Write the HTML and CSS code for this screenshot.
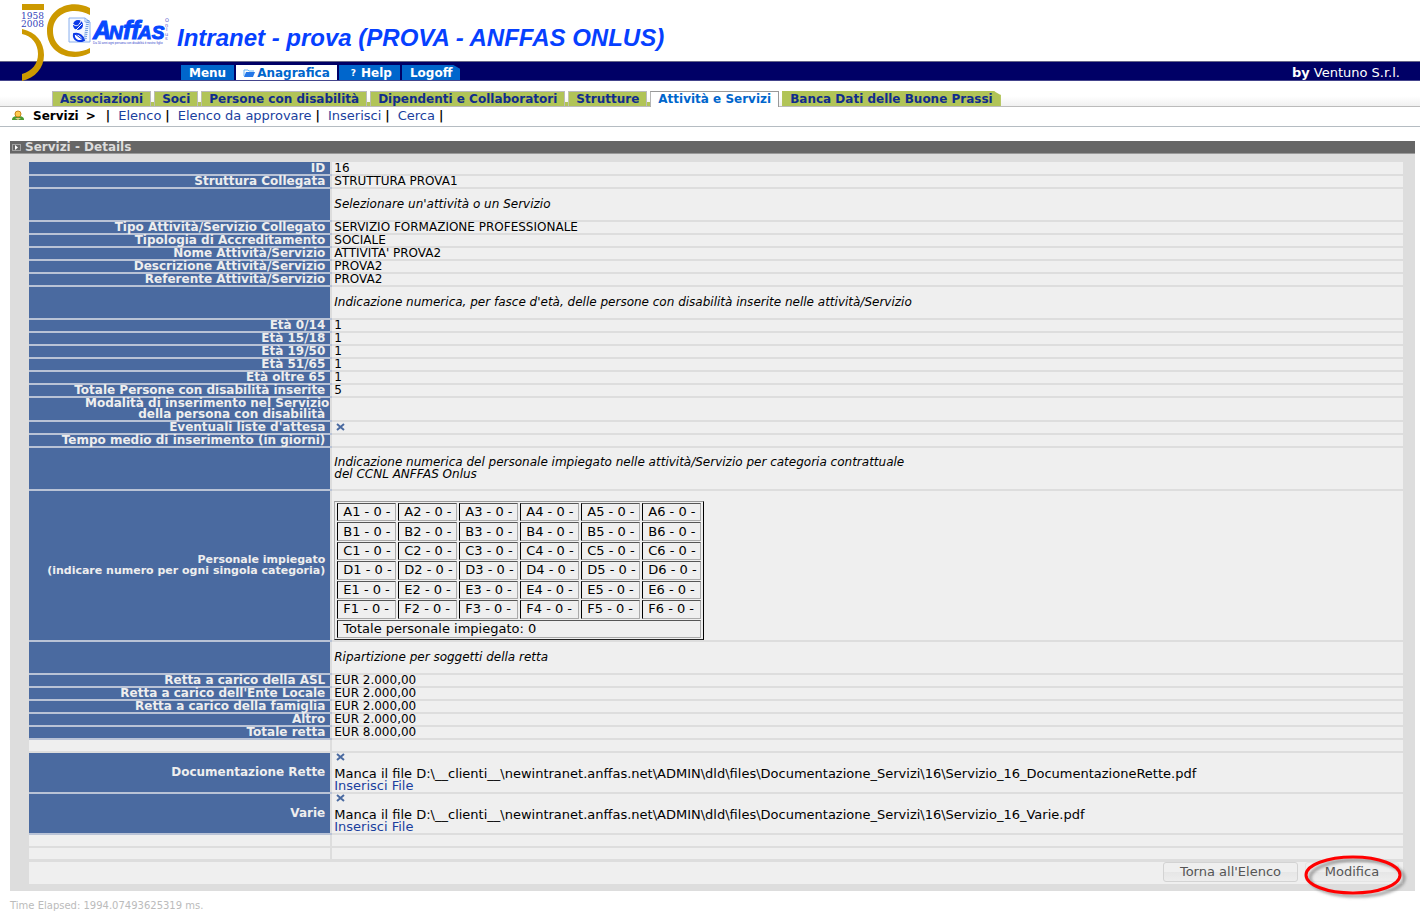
FILE: index.html
```
<!DOCTYPE html>
<html lang="it">
<head>
<meta charset="utf-8">
<title>Intranet - Servizi</title>
<link rel="stylesheet" href="styles.css">
</head>
<body>
<header class="masthead">
  <svg class="logo" width="176" height="84" viewBox="0 0 176 84" role="img" aria-label="Anffas Onlus 1958 2008">
    <path d="M22 4h22v6H22z" fill="#c90"/>
    <path d="M22 29C36 32 44 42 44 55S35 78 22 81V74C32 71 38 64 38 54S32 36 22 34z" fill="#c90"/>
    <path d="M90 15V8C70-2 47 9 47 31s23 32 43 22v-5C73 57 53 49 53 31S73 6 90 15z" fill="#c90"/>
    <g font-family="DejaVu Serif, serif" font-size="9" fill="#34b"><text x="21" y="19">1958</text><text x="21" y="27">2008</text></g>
    <path d="M69 18h16l5 4v20H69zM85 18v4h5" fill="#f4f8ff" stroke="#8ab0ee"/>
    <ellipse cx="78" cy="25" rx="5" ry="5" fill="#0a38e8"/><path d="M73 24c3 3 6 2 8-3M76 30l6-6" stroke="#fff" fill="none"/>
    <path d="M74 34c5-1 8 1 10 6-6 3-11-1-10-6z" fill="#fff" stroke="#0a38e8" stroke-width="2"/><path d="M75 34l8 6" stroke="#0a38e8"/>
    <path d="M88 20l-3 20" stroke="#6a9ae0" stroke-width="3" stroke-dasharray="1 1"/>
    <g font-family="Liberation Sans, sans-serif" fill="#0648ff" stroke="#0648ff" font-weight="bold" font-style="italic"><text x="93" y="39" font-size="25">A</text><text x="109" y="39" font-size="19">N</text><text x="123" y="39" font-size="26">ff</text><text x="138" y="39" font-size="19">AS</text></g>
    <text x="93" y="44" font-family="Liberation Sans, sans-serif" font-size="3" fill="#34c">Da 50 anni ogni persona con disabilità è nostro figlio</text>
    <g font-family="DejaVu Sans, sans-serif" font-size="5" fill="#55c"><text x="165" y="22">O</text><text x="165" y="27">n</text><text x="166" y="31">l</text><text x="165" y="36">u</text><text x="165" y="40">s</text></g>
  </svg>
  <h1 class="site-title">Intranet - prova (PROVA - ANFFAS ONLUS)</h1>
</header>
<nav class="topbar">
  <div class="top-tabs">
    <a class="top-tab" href="#">Menu</a>
    <a class="top-tab top-tab-active" href="#"><svg width="12" height="8" viewBox="0 0 12 8"><path d="M1 7V1h4l1 1h5" fill="none" stroke="#69b4f5"/><path d="M3 3h9l-2 5H1z" fill="#2678e8"/></svg>Anagrafica</a>
    <a class="top-tab" href="#"><span class="question">?</span>Help</a>
    <a class="top-tab top-tab-last" href="#">Logoff</a>
  </div>
  <p class="credit"><b>by</b> Ventuno S.r.l.</p>
</nav>
<nav class="sections">
  <a class="section" href="#">Associazioni</a>
  <a class="section" href="#">Soci</a>
  <a class="section" href="#">Persone con disabilità</a>
  <a class="section" href="#">Dipendenti e Collaboratori</a>
  <a class="section" href="#">Strutture</a>
  <a class="section section-active" href="#">Attività e Servizi</a>
  <a class="section section-last" href="#">Banca Dati delle Buone Prassi</a>
</nav>
<nav class="crumbs">
  <svg class="user" width="12" height="11" viewBox="0 0 12 11"><path d="M0 10c0-3 2-4 6-4s6 1 6 4z" fill="#4a9b32"/><path d="M3 8l3 2 3-2" fill="#dfc890"/><circle cx="6" cy="4" r="3" fill="#ffcb50" stroke="#c98218"/></svg>
  <b class="crumb-title">Servizi</b><b class="arrow">&gt;</b>
  <b>|</b><a href="#">Elenco</a><b>|</b><a href="#">Elenco da approvare</a><b>|</b><a href="#">Inserisci</a><b>|</b><a href="#">Cerca</a><b>|</b>
</nav>
<main class="panel">
  <h2 class="panel-title"><svg width="9" height="7" viewBox="0 0 9 7"><path d="M.5.5h8v6h-8z" fill="none" stroke="#ddd" stroke-dasharray="1 1"/><path d="M3 1l3 2.500-3 2.500z" fill="#fff"/></svg>Servizi - Details</h2>
  <div class="panel-body">
    <table class="details">
      <tr><th>ID</th><td>16</td></tr>
      <tr><th>Struttura Collegata</th><td>STRUTTURA PROVA1</td></tr>
      <tr class="note"><th></th><td>Selezionare un'attività o un Servizio</td></tr>
      <tr><th>Tipo Attività/Servizio Collegato</th><td>SERVIZIO FORMAZIONE PROFESSIONALE</td></tr>
      <tr><th>Tipologia di Accreditamento</th><td>SOCIALE</td></tr>
      <tr><th>Nome Attività/Servizio</th><td>ATTIVITA' PROVA2</td></tr>
      <tr><th>Descrizione Attività/Servizio</th><td>PROVA2</td></tr>
      <tr><th>Referente Attività/Servizio</th><td>PROVA2</td></tr>
      <tr class="note"><th></th><td>Indicazione numerica, per fasce d'età, delle persone con disabilità inserite nelle attività/Servizio</td></tr>
      <tr><th>Età 0/14</th><td>1</td></tr>
      <tr><th>Età 15/18</th><td>1</td></tr>
      <tr><th>Età 19/50</th><td>1</td></tr>
      <tr><th>Età 51/65</th><td>1</td></tr>
      <tr><th>Età oltre 65</th><td>1</td></tr>
      <tr><th>Totale Persone con disabilità inserite</th><td>5</td></tr>
      <tr class="two-line"><th class="flush">Modalità di inserimento nel Servizio<br>della persona con disabilità&nbsp;</th><td></td></tr>
      <tr><th>Eventuali liste d'attesa</th><td><svg class="cross" width="11" height="8" viewBox="0 0 11 8"><path d="M2 1l7 6M9 1L2 7" stroke="#4a6aa0" stroke-width="2"/></svg></td></tr>
      <tr><th>Tempo medio di inserimento (in giorni)</th><td></td></tr>
      <tr class="note note-tall"><th></th><td>Indicazione numerica del personale impiegato nelle attività/Servizio per categoria contrattuale<br>del CCNL ANFFAS Onlus</td></tr>
      <tr class="staff-row"><th>Personale impiegato<br>(indicare numero per ogni singola categoria)</th><td>
        <table class="staff">
          <tr><td>A1 - 0 -</td><td>A2 - 0 -</td><td>A3 - 0 -</td><td>A4 - 0 -</td><td>A5 - 0 -</td><td>A6 - 0 -</td></tr>
          <tr><td>B1 - 0 -</td><td>B2 - 0 -</td><td>B3 - 0 -</td><td>B4 - 0 -</td><td>B5 - 0 -</td><td>B6 - 0 -</td></tr>
          <tr><td>C1 - 0 -</td><td>C2 - 0 -</td><td>C3 - 0 -</td><td>C4 - 0 -</td><td>C5 - 0 -</td><td>C6 - 0 -</td></tr>
          <tr><td>D1 - 0 -</td><td>D2 - 0 -</td><td>D3 - 0 -</td><td>D4 - 0 -</td><td>D5 - 0 -</td><td>D6 - 0 -</td></tr>
          <tr><td>E1 - 0 -</td><td>E2 - 0 -</td><td>E3 - 0 -</td><td>E4 - 0 -</td><td>E5 - 0 -</td><td>E6 - 0 -</td></tr>
          <tr><td>F1 - 0 -</td><td>F2 - 0 -</td><td>F3 - 0 -</td><td>F4 - 0 -</td><td>F5 - 0 -</td><td>F6 - 0 -</td></tr>
          <tr><td colspan="6">Totale personale impiegato: 0</td></tr>
        </table>
      </td></tr>
      <tr class="note"><th></th><td>Ripartizione per soggetti della retta</td></tr>
      <tr><th>Retta a carico della ASL</th><td>EUR 2.000,00</td></tr>
      <tr><th>Retta a carico dell'Ente Locale</th><td>EUR 2.000,00</td></tr>
      <tr><th>Retta a carico della famiglia</th><td>EUR 2.000,00</td></tr>
      <tr><th>Altro</th><td>EUR 2.000,00</td></tr>
      <tr><th>Totale retta</th><td>EUR 8.000,00</td></tr>
      <tr><td></td><td></td></tr>
      <tr class="file"><th>Documentazione Rette</th><td><svg class="cross" width="11" height="8" viewBox="0 0 11 8"><path d="M2 1l7 6M9 1L2 7" stroke="#4a6aa0" stroke-width="2"/></svg><p>Manca il file D:\__clienti__\newintranet.anffas.net\ADMIN\dld\files\Documentazione_Servizi\16\Servizio_16_DocumentazioneRette.pdf<br><a href="#">Inserisci File</a></p></td></tr>
      <tr class="file"><th>Varie</th><td><svg class="cross" width="11" height="8" viewBox="0 0 11 8"><path d="M2 1l7 6M9 1L2 7" stroke="#4a6aa0" stroke-width="2"/></svg><p>Manca il file D:\__clienti__\newintranet.anffas.net\ADMIN\dld\files\Documentazione_Servizi\16\Servizio_16_Varie.pdf<br><a href="#">Inserisci File</a></p></td></tr>
      <tr><td></td><td></td></tr>
      <tr><td></td><td></td></tr>
    </table>
    <div class="actions">
      <button class="btn" type="button">Torna all'Elenco</button>
      <div class="marked">
        <button class="btn btn-edit" type="button">Modifica</button>
        <svg class="ring" width="110" height="48" viewBox="0 0 110 48"><defs><filter id="soft" x="-10%" y="-20%" width="120%" height="140%"><feGaussianBlur stdDeviation="1.500"/></filter></defs><ellipse cx="54" cy="25" rx="47" ry="18" fill="none" stroke="#777" stroke-opacity=".7" stroke-width="3" filter="url(#soft)"/><ellipse cx="50" cy="22" rx="47" ry="18" fill="none" stroke="#f00" stroke-width="3"/></svg>
      </div>
    </div>
  </div>
</main>
<footer class="elapsed">Time Elapsed: 1994.07493625319 ms.</footer>
</body>
</html>
```
FILE: styles.css
```
* { box-sizing: border-box; }
body { margin: 0; background: #fff; color: #000; font: 12px/10px "DejaVu Sans", sans-serif; }
a { color: #1a3f9e; text-decoration: none; }
p { margin: 0; }
svg { flex: none; }

.masthead { position: relative; height: 61px; padding: 26px 0 0 177px; }
.logo { position: absolute; left: 0; top: 0; z-index: 2; }
.site-title { margin: 0; font: italic bold 24px/24px "Liberation Sans", sans-serif; color: #0640ff; white-space: nowrap; }

.topbar { display: flex; justify-content: space-between; height: 20px; padding: 3px 20px 0 181px; background: #006; border-top: 1px solid #668; border-bottom: 1px solid #44448c; }
.top-tabs { display: flex; gap: 2px; }
.top-tab { display: flex; align-items: center; padding: 0 8px; background: #06c; color: #fff; font-weight: bold; line-height: 14px; }
.top-tab-active { gap: 2px; padding: 0 7px; background: #fff; color: #06c; }
.question { margin: 1px 5px 0 4px; font-size: 9px; }
.top-tab-last { clip-path: polygon(0 0, calc(100% - 7px) 0, 100% 4px, 100% 100%, 0 100%); }
.credit { color: #fff; font-size: 13px; line-height: 15px; }

.sections { display: flex; align-items: stretch; gap: 3px; height: 26px; padding: 10px 0 0 52px; border-bottom: 1px solid #bbb; background: linear-gradient(#fff 60%, #f0f0f0); }
.section { padding: 0 7px; background: #b1c457; border: 1px solid #bbb; border-bottom: 0; color: #102c8c; font-weight: bold; line-height: 15px; white-space: nowrap; box-shadow: 3px 11px 0 0 #b1c457; clip-path: inset(0 -3px 0 0); }
.section-active { margin-bottom: -1px; background: #fff; border-color: #999; color: #06c; box-shadow: none; }
.section-last { border-color: #b1c457; box-shadow: none; clip-path: polygon(0 0, calc(100% - 7px) 0, 100% 4px, 100% 100%, 0 100%); }

.crumbs { display: flex; align-items: center; height: 20px; padding: 0 12px 2px; border-bottom: 1px solid #b5bcc2; font-size: 13px; }
.crumbs a { margin: 0 4px 0 8px; }
.crumbs b { font-size: 12px; }
.crumb-title { margin-left: 9px; }
.arrow { margin: 0 10px 0 7px; }

.panel { margin: 14px 5px 0 10px; background: #ddd; }
.panel-title { display: flex; align-items: center; gap: 4px; height: 13px; margin: 0; padding-left: 2px; background: #666; border-bottom: 1px solid #999; color: #ddd; font-size: 12px; line-height: 12px; }
.panel-body { padding: 8px 12px 7px 19px; }

.details { width: 100%; border-collapse: collapse; table-layout: fixed; }
.details th, .details td { height: 13px; padding: 0 2px 1px; border-bottom: 2px solid #ddd; background: #efefef; text-align: left; }
.details th { width: 22%; padding: 0 5px 1px 0; background: #4a6aa0; border-bottom-color: #b9c3d6; color: #eee; text-align: right; white-space: nowrap; }
.details .flush { padding-right: 1px; }
.details .two-line > * { padding-bottom: 0; line-height: 11px; }
.details td + td, .details th + td { border-left: 2px solid #ddd; }
.details .note > * { height: 33px; font-style: italic; }
.details .note-tall > * { height: 43px; line-height: 12px; }
.details .staff-row > * { height: 151px; }
.details .staff-row > th { font-size: 11px; line-height: 11px; }
.details .staff-row > td { padding-bottom: 0; vertical-align: bottom; }
.details .file > * { height: 41px; }
.details .file > td { padding-bottom: 0; }
.file p { margin-top: 7px; font-size: 13px; line-height: 12px; }
.cross { display: block; margin-left: 1px; }

.details .staff { width: 370px; height: 139px; border: 1px solid; border-color: #999 #000 #222 #aaa; border-collapse: separate; border-spacing: 2px 1px; table-layout: fixed; font-size: 13px; }
.details .staff td { height: 18px; padding: 0 4px 0 5px; border: 1px solid; border-color: #555 #aaa #aaa #000; white-space: nowrap; }

.actions { display: flex; justify-content: flex-end; gap: 7px; height: 22px; margin-top: 1px; padding-right: 4px; background: #efefef; }
.btn { height: 20px; padding: 0 16px; border: 1px solid #d3d3d3; border-radius: 3px; background: linear-gradient(#efefef 50%, #e6e6e6 50%, #ededed); color: #555; font: 13px/18px "DejaVu Sans", sans-serif; }
.btn-edit { min-width: 94px; border-color: #e4e4e4; }
.marked { position: relative; }
.ring { position: absolute; left: -2px; top: -9px; }

.elapsed { padding: 10px; color: #bbb; font-size: 10px; }
```
